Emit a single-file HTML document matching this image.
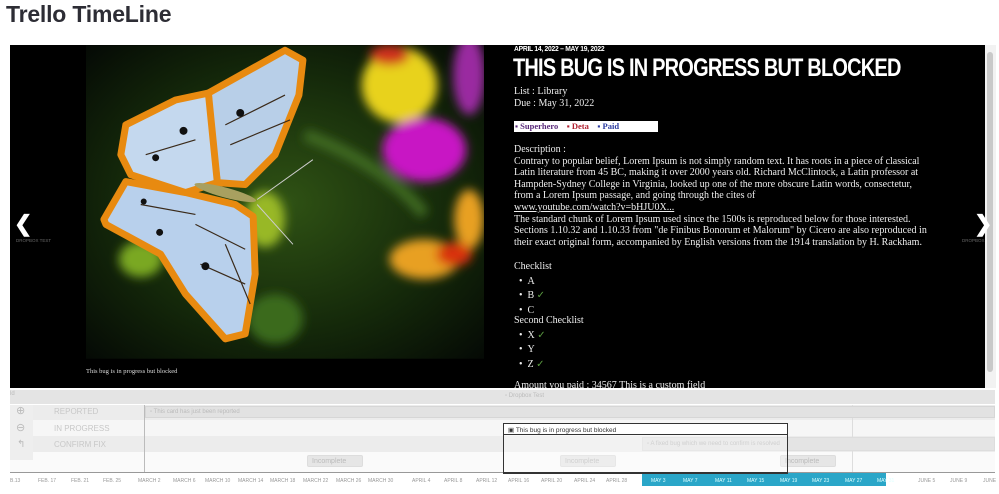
<!DOCTYPE html>
<html><head><style>
*{margin:0;padding:0;box-sizing:border-box}
body{width:999px;height:494px;overflow:hidden;background:#fff;font-family:"Liberation Sans",sans-serif;position:relative}
.a{position:absolute}
h1{position:absolute;left:6px;top:1px;font-size:23px;font-weight:bold;color:#2d2d35;letter-spacing:-0.2px}
.txt{font-family:"Liberation Serif",serif;color:#eee;font-size:10px;line-height:11.6px}
.lbl{font-size:8px;color:#c8c8c8;font-family:"Liberation Sans",sans-serif}
.tk{position:absolute;top:478px;font-size:5px;color:#999}
.pill{position:absolute;height:12px;width:56px;background:#e6e6e6;border:1px solid #ddd;border-radius:2px;font-size:7px;color:#bbb;padding:2px 4px}
</style></head><body>
<h1>Trello TimeLine</h1>
<div class="a" style="left:10px;top:45px;width:975px;height:343px;background:#000"></div>
<div class="a" style="left:985px;top:45px;width:11px;height:343px;background:#f2f2f2"></div>
<div class="a" style="left:987px;top:52px;width:6px;height:320px;background:#c9c9c9;border-radius:3px"></div>
<svg class="a" style="left:86px;top:45px" width="398" height="314" viewBox="0 0 400 315">
<defs>
<radialGradient id="bg" cx="0.5" cy="0.5" r="0.7"><stop offset="0" stop-color="#2f5214"/><stop offset="0.6" stop-color="#14280a"/><stop offset="1" stop-color="#050a05"/></radialGradient>
<filter id="bl"><feGaussianBlur stdDeviation="5"/></filter>
</defs>
<rect width="400" height="315" fill="url(#bg)"/>
<g filter="url(#bl)">
<ellipse cx="315" cy="40" rx="38" ry="38" fill="#e8d21a"/>
<ellipse cx="305" cy="10" rx="20" ry="10" fill="#d0301a"/>
<ellipse cx="385" cy="30" rx="16" ry="40" fill="#9a2aa0"/>
<ellipse cx="340" cy="105" rx="42" ry="32" fill="#c816c4"/>
<path d="M220 90 Q300 120 340 170" stroke="#3f6a24" stroke-width="12" fill="none"/>
<ellipse cx="340" cy="215" rx="35" ry="20" fill="#e8a020"/>
<ellipse cx="385" cy="175" rx="15" ry="30" fill="#e8a020"/>
<ellipse cx="370" cy="210" rx="18" ry="12" fill="#d83010"/>
<ellipse cx="55" cy="215" rx="22" ry="18" fill="#7aa820"/>
<ellipse cx="180" cy="175" rx="20" ry="28" fill="#98b828"/>
<ellipse cx="190" cy="275" rx="28" ry="25" fill="#3a6a1a"/>
</g>
<g stroke="#e88a10" stroke-width="7" stroke-linejoin="round">
<path d="M123 48 L200 5 L218 15 L214 50 L190 110 L160 140 L132 138 L125 80Z" fill="#b8cfe8"/>
<path d="M40 80 L90 55 L123 48 L132 138 L100 148 L45 130 L35 110Z" fill="#c4d8ee"/>
<path d="M18 175 L40 137 L100 148 L150 160 L168 172 L170 230 L160 290 L140 295 L100 250 L75 210 L20 180Z" fill="#b8d0ec"/>
</g>
<g stroke="#3a2a1a" stroke-width="1.2" fill="none">
<path d="M140 80 L200 50 M145 100 L205 75 M60 110 L110 95 M55 160 L110 170 M110 180 L160 205 M115 220 L160 240 M140 200 L165 260"/>
</g>
<g fill="#111"><circle cx="155" cy="68" r="4"/><circle cx="98" cy="86" r="4"/><circle cx="70" cy="113" r="3.5"/><circle cx="58" cy="157" r="3"/><circle cx="74" cy="188" r="3.5"/><circle cx="120" cy="222" r="4"/></g>
<ellipse cx="140" cy="148" rx="32" ry="5" fill="#a8a060" transform="rotate(15 140 148)"/>
<path d="M172 155 L228 115 M172 160 L208 200" stroke="#ccc" stroke-width="1"/>
</svg>
<div class="a txt" style="left:86px;top:366px;font-size:6.5px;color:#ddd">This bug is in progress but blocked</div>
<div class="a" style="left:14px;top:211px;color:#fff;font-size:22px;font-weight:bold">&#10094;</div>
<div class="a" style="left:16px;top:238px;color:#666;font-size:4.5px">DROPBOX TEST</div>
<div class="a" style="left:974px;top:211px;color:#fff;font-size:22px;font-weight:bold">&#10095;</div>
<div class="a" style="left:962px;top:238px;color:#666;font-size:4.5px">DROPBOX</div>

<div class="a" style="left:514px;top:44px;color:#fff;font-size:7.5px;font-weight:bold;letter-spacing:-0.3px;transform:scaleX(0.9);transform-origin:left">APRIL 14, 2022 – MAY 19, 2022</div>
<div class="a" style="left:513px;top:54px;color:#fff;font-size:25px;font-weight:bold;letter-spacing:-1px;transform:scaleX(0.8);transform-origin:left">THIS BUG IS IN PROGRESS BUT BLOCKED</div>
<div class="a txt" style="left:514px;top:86px">List : Library<br>Due : May 31, 2022</div>
<div class="a" style="left:514px;top:121px;width:144px;height:11px;background:#fff;font-family:'Liberation Serif',serif;font-size:8.5px;font-weight:bold;line-height:11px;padding-left:1px"><span style="color:#5a2a7a">▪ Superhero</span>&nbsp;&nbsp;&nbsp;&nbsp;<span style="color:#b02030">▪ Deta</span>&nbsp;&nbsp;&nbsp;&nbsp;<span style="color:#2a3aa0">▪ Paid</span></div>
<div class="a txt" style="left:514px;top:144px;width:415px">Description :<br>Contrary to popular belief, Lorem Ipsum is not simply random text. It has roots in a piece of classical Latin literature from 45 BC, making it over 2000 years old. Richard McClintock, a Latin professor at Hampden-Sydney College in Virginia, looked up one of the more obscure Latin words, consectetur, from a Lorem Ipsum passage, and going through the cites of<br><u>www.youtube.com/watch?v=bHJU0X...</u><br>The standard chunk of Lorem Ipsum used since the 1500s is reproduced below for those interested. Sections 1.10.32 and 1.10.33 from "de Finibus Bonorum et Malorum" by Cicero are also reproduced in their exact original form, accompanied by English versions from the 1914 translation by H. Rackham.</div>
<div class="a txt" style="left:514px;top:260px;line-height:14.5px">Checklist<br>&nbsp;&nbsp;•&nbsp;&nbsp;A<br>&nbsp;&nbsp;•&nbsp;&nbsp;B <span style="color:#5a9a40">✓</span><br>&nbsp;&nbsp;•&nbsp;&nbsp;C</div>
<div class="a txt" style="left:514px;top:314px;line-height:14.5px">Second Checklist<br>&nbsp;&nbsp;•&nbsp;&nbsp;X <span style="color:#5a9a40">✓</span><br>&nbsp;&nbsp;•&nbsp;&nbsp;Y<br>&nbsp;&nbsp;•&nbsp;&nbsp;Z <span style="color:#5a9a40">✓</span></div>
<div class="a txt" style="left:514px;top:380px;height:8px;overflow:hidden">Amount you paid : 34567 This is a custom field</div>

<!-- timeline -->
<div class="a" style="left:10px;top:390px;width:985px;height:14px;background:#e4e4e4"></div>
<div class="a" style="left:10px;top:391px;font-size:6px;color:#bbb">ld</div>
<div class="a" style="left:505px;top:393px;font-size:6px;color:#bbb">▫ Dropbox Test</div>
<div class="a" style="left:10px;top:405px;width:985px;height:15px;background:#ececec"></div>
<div class="a" style="left:10px;top:420px;width:985px;height:16px;background:#f6f6f6"></div>
<div class="a" style="left:10px;top:436px;width:985px;height:16px;background:#ececec"></div>
<div class="a" style="left:10px;top:452px;width:985px;height:20px;background:#fafafa"></div>
<div class="a" style="left:10px;top:405px;width:23px;height:55px;background:#eee"></div>
<div class="a lbl" style="left:16px;top:404px;font-size:11px;color:#bbb">⊕</div>
<div class="a lbl" style="left:16px;top:421px;font-size:11px;color:#bbb">⊖</div>
<div class="a lbl" style="left:17px;top:439px;font-size:10px;color:#bbb">↰</div>
<div class="a lbl" style="left:54px;top:407px">REPORTED</div>
<div class="a lbl" style="left:54px;top:424px">IN PROGRESS</div>
<div class="a lbl" style="left:54px;top:440px">CONFIRM FIX</div>
<div class="a" style="left:144px;top:405px;width:1px;height:68px;background:#bbb"></div>
<div class="a" style="left:852px;top:405px;width:1px;height:68px;background:#ddd"></div>
<div class="a" style="left:145px;top:406px;width:850px;height:12px;background:#e2e2e2;border:1px solid #d6d6d6;font-size:6px;color:#bbb;padding:2px 4px">▫ This card has just been reported</div>
<div class="a" style="left:642px;top:437px;width:353px;height:14px;background:#e4e4e4;border:1px solid #ddd;font-size:6px;color:#bbb;padding:3px 4px">▫ A fixed bug which we need to confirm is resolved</div>
<div class="pill" style="left:307px;top:455px">Incomplete</div>
<div class="pill" style="left:560px;top:455px">Incomplete</div>
<div class="pill" style="left:780px;top:455px">Incomplete</div>
<div class="a" style="left:503px;top:423px;width:285px;height:51px;border:1px solid #333;background:rgba(255,255,255,0.3)"><div style="height:11px;background:#fff;border-bottom:1px solid #333;font-size:6.5px;color:#333;padding:2px 4px">▣ This bug is in progress but blocked</div></div>
<div class="a" style="left:642px;top:473px;width:244px;height:13px;background:#2aa6c8"></div>
<div class="a" style="left:10px;top:472px;width:985px;height:1px;background:#999"></div>
<div class="a" style="left:503px;top:472px;width:285px;height:2px;background:#333"></div>
<div class="tk" style="left:10px">B.13</div><div class="tk" style="left:38px">FEB. 17</div><div class="tk" style="left:71px">FEB. 21</div><div class="tk" style="left:103px">FEB. 25</div>
<div class="tk" style="left:138px">MARCH 2</div><div class="tk" style="left:173px">MARCH 6</div><div class="tk" style="left:205px">MARCH 10</div><div class="tk" style="left:238px">MARCH 14</div><div class="tk" style="left:270px">MARCH 18</div><div class="tk" style="left:303px">MARCH 22</div><div class="tk" style="left:336px">MARCH 26</div><div class="tk" style="left:368px">MARCH 30</div>
<div class="tk" style="left:412px">APRIL 4</div><div class="tk" style="left:444px">APRIL 8</div><div class="tk" style="left:476px">APRIL 12</div><div class="tk" style="left:508px">APRIL 16</div><div class="tk" style="left:541px">APRIL 20</div><div class="tk" style="left:574px">APRIL 24</div><div class="tk" style="left:606px">APRIL 28</div>
<div class="tk" style="left:651px;color:#dff">MAY 3</div><div class="tk" style="left:683px;color:#dff">MAY 7</div><div class="tk" style="left:715px;color:#dff">MAY 11</div><div class="tk" style="left:747px;color:#dff">MAY 15</div><div class="tk" style="left:780px;color:#dff">MAY 19</div><div class="tk" style="left:812px;color:#dff">MAY 23</div><div class="tk" style="left:845px;color:#dff">MAY 27</div><div class="tk" style="left:877px;color:#dff">MAY 31</div>
<div class="tk" style="left:918px">JUNE 5</div><div class="tk" style="left:950px">JUNE 9</div><div class="tk" style="left:983px">JUNE</div>
</body></html>
